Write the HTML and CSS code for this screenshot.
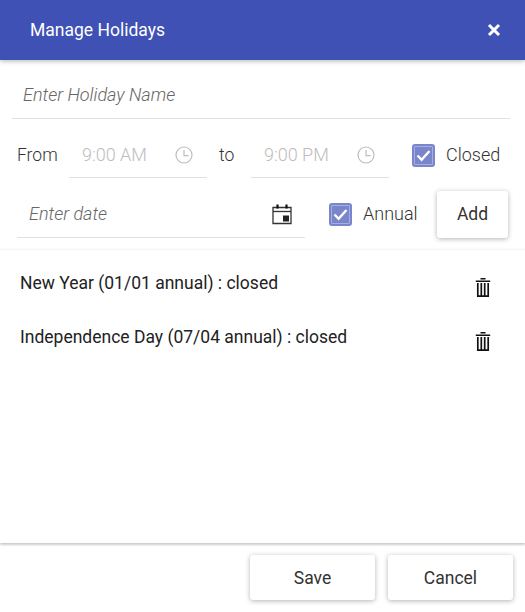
FILE: index.html
```html
<!DOCTYPE html>
<html lang="en">
<head>
<meta charset="UTF-8">
<meta name="viewport" content="width=device-width, initial-scale=1.0">
<title>Manage Holidays</title>
<link rel="stylesheet" href="styles.css">
</head>
<body>

<div class="dialog">
    <header class="dialog-header">
        <h2>Manage Holidays</h2>
        <button class="close-btn" aria-label="Close">
            <svg width="14" height="14" viewBox="0 0 14 14"><path d="M2 2L12 12M12 2L2 12" stroke="#fff" stroke-width="3" fill="none"/></svg>
        </button>
    </header>

    <div class="name-row">
        <input class="name-input" type="text" placeholder="Enter Holiday Name">
    </div>

    <div class="time-row">
        <span class="label from-label">From</span>
        <div class="time-field">
            <span class="time-value">9:00 AM</span>
            <svg class="clock" width="18" height="18" viewBox="0 0 18 18"><circle cx="9" cy="9" r="8" fill="none" stroke="#bdbdbd" stroke-width="1.2"/><path d="M9 4V9.6H13.6" fill="none" stroke="#bdbdbd" stroke-width="1.2"/></svg>
        </div>
        <span class="label to-label">to</span>
        <div class="time-field">
            <span class="time-value">9:00 PM</span>
            <svg class="clock" width="18" height="18" viewBox="0 0 18 18"><circle cx="9" cy="9" r="8" fill="none" stroke="#bdbdbd" stroke-width="1.2"/><path d="M9 4V9.6H13.6" fill="none" stroke="#bdbdbd" stroke-width="1.2"/></svg>
        </div>
        <span class="check closed-check">
            <svg width="15" height="13" viewBox="0 0 15 13"><path d="M1.5 6.5L5.6 10.8L13.5 2" fill="none" stroke="#fff" stroke-width="2.4"/></svg>
        </span>
        <span class="label light nudge">Closed</span>
    </div>

    <div class="date-row">
        <div class="date-field">
            <span class="date-hint nudge">Enter date</span>
            <svg width="20" height="21" viewBox="0 0 20 21"><path d="M1 3.5H19V19.5H1Z" fill="none" stroke="#333" stroke-width="1.3"/><path d="M1 7.5H19" stroke="#333" stroke-width="1.3"/><path d="M5.5 0.5V4.5M14.5 0.5V4.5" stroke="#111" stroke-width="2.2"/><rect x="11" y="11.5" width="6" height="6" fill="#222"/></svg>
        </div>
        <span class="check annual-check">
            <svg width="15" height="13" viewBox="0 0 15 13"><path d="M1.5 6.5L5.6 10.8L13.5 2" fill="none" stroke="#fff" stroke-width="2.4"/></svg>
        </span>
        <span class="label light annual-label nudge">Annual</span>
        <button class="raised add-btn">Add</button>
    </div>

    <div class="holiday-list">
        <div class="holiday-item">
            <span>New Year (01/01 annual) : closed</span>
            <svg class="trash" width="16" height="19" viewBox="0 0 16 19"><path d="M5.5 0.8H10.5M0.8 3.3H15.2" stroke="#111" stroke-width="1.6"/><path d="M2.8 5V18.2H13.2V5M6.3 5V18M9.7 5V18" fill="none" stroke="#111" stroke-width="1.7"/></svg>
        </div>
        <div class="holiday-item">
            <span>Independence Day (07/04 annual) : closed</span>
            <svg class="trash" width="16" height="19" viewBox="0 0 16 19"><path d="M5.5 0.8H10.5M0.8 3.3H15.2" stroke="#111" stroke-width="1.6"/><path d="M2.8 5V18.2H13.2V5M6.3 5V18M9.7 5V18" fill="none" stroke="#111" stroke-width="1.7"/></svg>
        </div>
    </div>

    <footer class="dialog-footer">
        <button class="raised footer-btn">Save</button>
        <button class="raised footer-btn">Cancel</button>
    </footer>
</div>

</body>
</html>
```

FILE: styles.css
```css
* {
    box-sizing: border-box;
}
body {
    margin: 0;
    background-color: #fff;
    font-family: Roboto, sans-serif;
    color: #222;
}
.dialog {
    width: 525px;
    height: 612px;
    overflow: hidden;
}
.dialog-header {
    height: 60px;
    background-color: #3f51b5;
    display: flex;
    align-items: center;
    justify-content: space-between;
    padding: 0 24px 0 30px;
    box-shadow: 0 1px 5px rgba(0, 0, 0, 0.3);
}
.dialog-header h2 {
    margin: 0;
    color: #fff;
    font-size: 17.5px;
    font-weight: 400;
}
.close-btn {
    border: none;
    background: none;
    padding: 0;
    display: flex;
}
.name-row {
    margin: 0 15px 0 12px;
    height: 59px;
    border-bottom: 1px solid #e0e0e0;
}
.name-input {
    width: 100%;
    height: 58px;
    padding: 11px 0 0 11px;
    border: none;
    outline: none;
    background: transparent;
    font-family: Roboto, sans-serif;
    font-size: 18px;
    font-style: italic;
    font-weight: 300;
}
.name-input::placeholder {
    color: #666;
    opacity: 1;
}
.label {
    font-size: 17.5px;
    font-weight: 300;
    color: #333;
}
.light {
    font-size: 18px;
}
.nudge {
    margin-bottom: 2px;
}
.time-row {
    display: flex;
    align-items: center;
    height: 59px;
    padding: 13px 0 0 17px;
}
.from-label {
    width: 52px;
}
.to-label {
    width: 44px;
    padding-left: 12px;
}
.time-field {
    width: 138px;
    height: 46px;
    padding: 0 14px 0 13px;
    display: flex;
    align-items: center;
    justify-content: space-between;
    border-bottom: 1px solid #e0e0e0;
}
.time-value {
    font-size: 18px;
    font-weight: 300;
    color: #bdbdbd;
}
.check {
    width: 23px;
    height: 23px;
    display: flex;
    align-items: center;
    justify-content: center;
    background-color: #7986cb;
    border: 2px solid #7986cb;
    border-radius: 3px;
    box-shadow: inset 0 0 0 1px #a5aee0;
}
.closed-check {
    margin: 0 11px 0 23px;
}
.date-row {
    display: flex;
    align-items: center;
    height: 60px;
    padding: 13px 0 0 17px;
}
.date-field {
    width: 288px;
    height: 47px;
    padding: 0 13px 0 12px;
    display: flex;
    align-items: center;
    justify-content: space-between;
    border-bottom: 1px solid #e0e0e0;
}
.date-hint {
    font-size: 18px;
    font-weight: 300;
    font-style: italic;
    color: #666;
}
.annual-check {
    margin: 0 11px 0 24px;
}
.annual-label {
    width: 74px;
}
.raised {
    border: none;
    background-color: #fff;
    border-radius: 3px;
    box-shadow: 0 1px 5px rgba(0, 0, 0, 0.3);
    font-family: Roboto, sans-serif;
    font-size: 17.5px;
    color: #333;
}
.add-btn {
    width: 71px;
    height: 47px;
    padding-bottom: 3px;
}
.holiday-list {
    height: 293px;
    margin-top: 12px;
    padding: 6px 0 0 20px;
    box-shadow: 0 2px 2px rgba(0, 0, 0, 0.2), 0 -1px 2px rgba(0, 0, 0, 0.06);
}
.holiday-item {
    height: 54px;
    display: flex;
    align-items: center;
    justify-content: space-between;
    padding-right: 34px;
    font-size: 17.5px;
    color: #222;
}
.trash {
    margin-top: 9px;
}
.dialog-footer {
    display: flex;
    justify-content: flex-end;
    gap: 13px;
    padding: 12px 12px 0 0;
}
.footer-btn {
    width: 125px;
    height: 45px;
}
```
